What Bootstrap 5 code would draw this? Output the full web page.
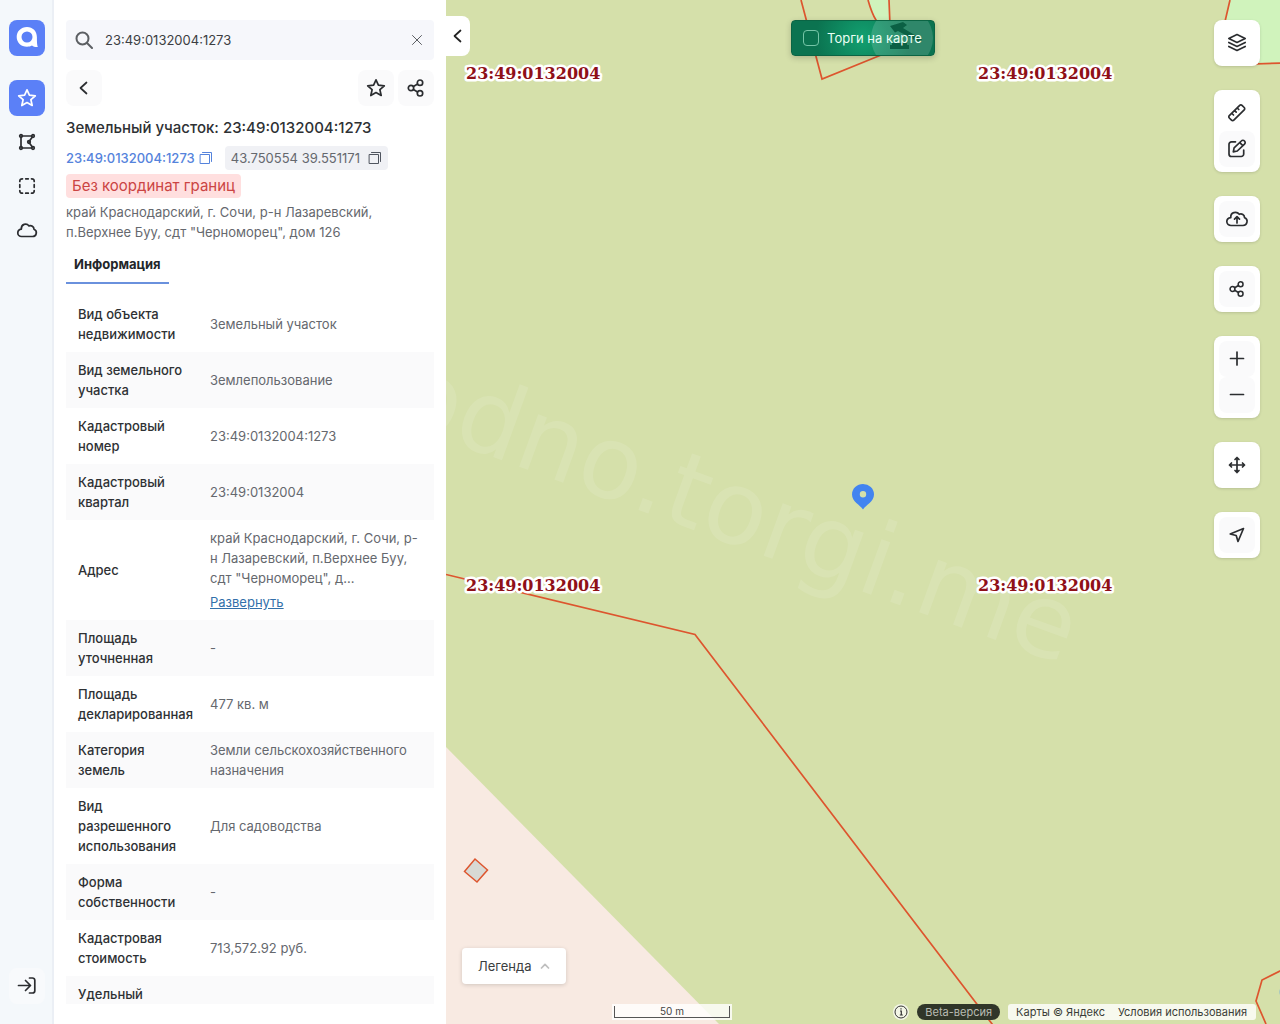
<!DOCTYPE html>
<html lang="ru">
<head>
<meta charset="utf-8">
<meta name="viewport" content="width=device-width, initial-scale=1">
<title>Земельный участок: 23:49:0132004:1273</title>
<link href="https://cdn.jsdelivr.net/npm/bootstrap@5.3.0/dist/css/bootstrap.min.css" rel="stylesheet">
<style>
body{font-family:Inter,"Noto Sans",sans-serif;font-size:13px;line-height:20px;color:#2e3134;background:#fff}
svg.ico{fill:none;stroke:currentColor;stroke-width:1.7;stroke-linecap:round;stroke-linejoin:round;display:block}
svg.ico-thin{stroke-width:1}
svg.ico-bold{stroke-width:2}
.rail{width:54px;padding-left:2px;background:#f4f8fb;border-right:2px solid #ebeff5}
.sq{width:36px;height:36px;padding:0;border:0;border-radius:8px;color:#2b2d30;background:transparent;display:flex;align-items:center;justify-content:center}
.sq-blue,.sq-blue:hover{background:#5b80f7;color:#fff}
.sq-soft{background:#fafafb}
.rail .sq-soft{background:#f8fafc}
.side{width:392px;padding:20px 12px}
.find{height:40px;background:#f6f7fb;border-radius:4px;padding:0 9px;color:#5c5f63}
.find input{font-size:13px;color:#3c3e42;background:transparent;border:0;outline:0;min-width:0;padding:0}
.clear-btn{border:0;background:transparent;padding:0;color:#5c5f63}
.head-btns{margin:10px 0}
h1{font-size:15px;line-height:24px;font-weight:500;margin:0 0 6px}
.code-link{color:#5583dc;font-weight:500;text-decoration:none}
.chip{background:#f0f1f5;border-radius:4px;height:24px;color:#65686e;padding:0 6px;margin-left:12px}
.copy-btn{border:0;background:transparent;padding:0;color:#50555f}
.copy-btn.code-link{color:#5583dc}
.warn{background:#ffdfdf;color:#cb4443;font-size:15px;line-height:24px;border-radius:4px;padding:0 6px}
.addr{color:#65686e}
.tab-on{display:block;border:0;background:transparent;font-weight:700;line-height:20px;padding:0 8px 8px;border-bottom:2px solid #6a91dd;color:#232629;margin-bottom:12px}
.facts{--bs-table-bg:transparent;table-layout:fixed;line-height:20px}
.facts>tbody>tr>*{border:0;padding:8px 12px 8px 8px;vertical-align:middle;color:#65686e}
.facts>tbody>tr>th{width:136px;padding-left:12px;padding-right:8px;font-weight:500;color:#2e3134}
.facts>tbody>tr:nth-child(even){background:#fafafb}
.facts a{color:#3270aa}
.map{background:#d5e0aa}
.fold{left:0;top:16px;width:24px;height:40px;border:0;padding:0;background:#fff;border-radius:0 8px 8px 0;color:#222}
.deals{top:20px;width:144px;height:36px;border:1px solid #0b6444;border-radius:4px;padding-left:11px;gap:8px;background:radial-gradient(circle at 50% 50%,#12a070,#0b7350 65%);color:#eafff5;box-shadow:0 2px 6px rgba(0,0,0,.2);cursor:pointer}
.deals input{appearance:none;width:16px;height:16px;border:1px solid #75c5a7;border-radius:4px;margin:0}
.tools{top:20px;right:20px;gap:24px}
.tool{background:#fff;border-radius:8px;padding:5px;box-shadow:0 1px 3px rgba(0,0,0,.14)}
.legend{left:16px;bottom:40px;height:36px;border:0;border-radius:4px;background:#fff;color:#3a3d40;padding:0 16px;gap:8px;box-shadow:0 1px 4px rgba(0,0,0,.16)}
.base{left:0;right:0;bottom:4px;padding:0 24px 0 166px;font-size:11px;line-height:16px}
.scale-box{background:rgba(255,255,255,.8);padding:2px;width:120px}
.scale-line{border:1px solid #555;border-top:0;height:12px;line-height:11px;font-size:10px;color:#444;text-align:center}
.beta{background:#303629;color:#b9bcb3;border-radius:8px;padding:0 8px}
.credit{background:rgba(255,255,255,.8);border-radius:3px;padding:0 9px 0 8px;gap:13px}
.credit a{color:#3a3d37;text-decoration:none}
</style>
</head>
<body>
<svg width="0" height="0" class="position-absolute" aria-hidden="true">
  <symbol id="star" viewBox="0 0 20 20"><path d="M10 1.800l2.400 5.400 5.900.6-4.400 3.900 1.300 5.800-5.200-3-5.200 3 1.300-5.800L1.700 7.800l5.900-.6z"/></symbol>
  <symbol id="share" viewBox="0 0 20 20"><circle cx="5" cy="10" r="2.700"/><circle cx="14" cy="4.700" r="2.700"/><circle cx="14" cy="15.300" r="2.700"/><path d="M7.400 8.600l4.200-2.500M7.400 11.400l4.200 2.500"/></symbol>
  <symbol id="copy" viewBox="0 0 14 14"><path d="M1.500 3.500h9v9h-9zM3.500 1.500h9v9"/></symbol>
</svg>
<div class="d-flex vh-100 overflow-hidden">
  <nav class="rail d-flex flex-column align-items-center flex-shrink-0 py-3">
    <a href="#" class="sq sq-blue mt-1 mb-4" aria-label="Главная"><svg width="26" height="26" viewBox="0 0 26 26"><path d="M13 2c-6 0-10.300 4.400-10.300 9.900S7 21.700 13 21.700c2 0 3.600-.4 5-1.200 1.500 1.100 3.400 1.700 5.800 1.500-.8-1.800-.9-5.300-.9-9.900C22.900 6.200 18.800 2 13 2zm0 4.500a5.500 5.500 0 1 1 0 11 5.500 5.500 0 0 1 0-11z" fill="#fff" fill-rule="evenodd"/></svg></a>
    <button class="sq sq-blue mb-2" aria-label="Избранное"><svg class="ico" width="20" height="20"><use href="#star"/></svg></button>
    <button class="sq mb-2" aria-label="Полигон"><svg class="ico" width="20" height="20" viewBox="0 0 20 20"><path d="M5.200 4H14.500M4 5.200v9.600M5.200 16H14.500M15.200 5.200l-3 4.100M12.200 10.700l3 4.100"/><circle cx="4" cy="4" r="1.300"/><circle cx="16" cy="4" r="1.300"/><circle cx="4" cy="16" r="1.300"/><circle cx="16" cy="16" r="1.300"/><circle cx="12" cy="10" r="1.300"/></svg></button>
    <button class="sq mb-2" aria-label="Выделить область"><svg class="ico" width="20" height="20" viewBox="0 0 20 20"><path d="M2.800 5.500v-.4a2.300 2.300 0 0 1 2.300-2.300h.4M14.500 2.800h.4a2.300 2.300 0 0 1 2.300 2.300v.4M17.200 14.500v.4a2.300 2.300 0 0 1-2.300 2.300h-.4M5.500 17.200h-.4a2.300 2.300 0 0 1-2.300-2.300v-.4M8.700 2.800h2.600M8.700 17.200h2.600M2.800 8.700v2.600M17.200 8.700v2.600"/></svg></button>
    <button class="sq" aria-label="Облако"><svg class="ico" width="22" height="20" viewBox="0 0 22 20"><path d="M5.500 16.500h11a3.800 3.800 0 0 0 1.500-7.300c0-2.600-2.700-4.200-5-3.300C10.500 2.700 5 4 5.300 9.200c-2 .3-3.500 1.800-3.500 3.700s1.600 3.600 3.700 3.600z"/></svg></button>
    <button class="sq sq-soft mt-auto mb-1" aria-label="Войти"><svg class="ico" width="20" height="20" viewBox="0 0 20 20"><path d="M1.500 9.500h11M8.500 4.500l5 5-5 5M12.500 2h3a2.300 2.300 0 0 1 2.300 2.300v10.400a2.300 2.300 0 0 1-2.300 2.300h-3"/></svg></button>
  </nav>

  <aside class="side d-flex flex-column flex-shrink-0">
    <div class="find d-flex align-items-center flex-shrink-0">
      <svg class="ico ico-bold" width="18" height="18" viewBox="0 0 18 18"><circle cx="7.500" cy="7.500" r="6"/><path d="M12 12l5 5"/></svg>
      <input class="flex-grow-1 ms-2 ps-1" type="text" value="23:49:0132004:1273" aria-label="Поиск">
      <button class="clear-btn" aria-label="Очистить"><svg class="ico ico-thin" width="16" height="16" viewBox="0 0 16 16"><path d="M3.500 3.500l9 9M12.500 3.500l-9 9"/></svg></button>
    </div>
    <div class="d-flex gap-1 head-btns">
      <button class="sq sq-soft me-auto" aria-label="Назад"><svg class="ico" width="16" height="16" viewBox="0 0 16 16"><path d="M10.500 2.500L4.500 8l6 5.500"/></svg></button>
      <button class="sq sq-soft" aria-label="В избранное"><svg class="ico" width="20" height="20"><use href="#star"/></svg></button>
      <button class="sq sq-soft" aria-label="Поделиться"><svg class="ico" width="20" height="20"><use href="#share"/></svg></button>
    </div>
    <h1>Земельный участок: 23:49:0132004:1273</h1>
    <div class="d-flex align-items-center mb-1">
      <a href="#" class="code-link">23:49:0132004:1273</a>
      <button class="copy-btn code-link ms-1" aria-label="Копировать номер"><svg class="ico ico-thin" width="14" height="14"><use href="#copy"/></svg></button>
      <span class="chip d-flex align-items-center gap-2">43.750554 39.551171
        <button class="copy-btn" aria-label="Копировать координаты"><svg class="ico ico-thin" width="14" height="14"><use href="#copy"/></svg></button></span>
    </div>
    <div class="warn align-self-start mb-1">Без координат границ</div>
    <div class="addr mb-2 pb-1">край Краснодарский, г. Сочи, р-н Лазаревский, п.Верхнее Буу, сдт "Черноморец", дом 126</div>
    <div><button class="tab-on">Информация</button></div>
    <div class="overflow-hidden flex-grow-1">
      <table class="table facts mb-0"><tbody>
        <tr><th scope="row">Вид объекта недвижимости</th><td>Земельный участок</td></tr>
        <tr><th scope="row">Вид земельного участка</th><td>Землепользование</td></tr>
        <tr><th scope="row">Кадастровый номер</th><td>23:49:0132004:1273</td></tr>
        <tr><th scope="row">Кадастровый квартал</th><td>23:49:0132004</td></tr>
        <tr><th scope="row">Адрес</th><td>край Краснодарский, г. Сочи, р-н Лазаревский, п.Верхнее Буу, сдт "Черноморец", д...<a href="#" class="d-block pt-1">Развернуть</a></td></tr>
        <tr><th scope="row">Площадь уточненная</th><td>-</td></tr>
        <tr><th scope="row">Площадь декларированная</th><td>477 кв. м</td></tr>
        <tr><th scope="row">Категория земель</th><td>Земли сельскохозяйственного назначения</td></tr>
        <tr><th scope="row">Вид разрешенного использования</th><td>Для садоводства</td></tr>
        <tr><th scope="row">Форма собственности</th><td>-</td></tr>
        <tr><th scope="row">Кадастровая стоимость</th><td>713,572.92 руб.</td></tr>
        <tr><th scope="row">Удельный</th><td></td></tr>
      </tbody></table>
    </div>
  </aside>

  <main class="map position-relative flex-grow-1 overflow-hidden">
    <svg class="position-absolute top-0 start-0 w-100 h-100">
      <path d="M0 747L273 1024H0z" fill="#f8eae2"/>
      <path d="M422 0h21l2 53h-11V34L430 20z" fill="#d0f3bc"/>
      <path d="M784 0h60v63l-64 2-12-6z" fill="#d0f3bc"/>
      <g fill="none" stroke="#dd552e" stroke-width="1.700">
        <path d="M355 0l21 79 69-28L443 0M422 0q4 14 8 20l8 14M784 0l-14 60 8 5 60-2M0 574.500l249 60 299 392M840 968l-24 12-6 21 10 23"/>
        <path d="M18.500 871.500L29 859l12.500 11L31 882z" fill="#d8d9d4" stroke-width="1.500"/>
      </g>
      <circle cx="838" cy="992" r="5" fill="#a8c8c0"/>
      <text transform="translate(-55 420) rotate(20)" font-family="DejaVu Sans" font-size="102" fill="#fff" fill-opacity=".11">odno.torgi.me</text>
      <g font-family="DejaVu Serif" font-weight="700" font-size="16" fill="#8f1018" stroke="#fff" stroke-width="5" stroke-linejoin="round" paint-order="stroke">
        <text x="20" y="79">23:49:0132004</text><text x="532" y="79">23:49:0132004</text>
        <text x="20" y="591">23:49:0132004</text><text x="532" y="591">23:49:0132004</text>
      </g>
      <path d="M417 509.500c-3-4.500-11-8-11-15a11 10.500 0 0 1 22 0c0 7-8 10.500-11 15zM417 491a3.200 3.200 0 1 0 0 6.400 3.200 3.200 0 0 0 0-6.400z" fill="#4284f0" fill-rule="evenodd"/>
    </svg>

    <button class="fold position-absolute d-flex align-items-center justify-content-center" aria-label="Свернуть панель"><svg class="ico" width="16" height="16" viewBox="0 0 16 16"><path d="M10.500 2.500L4.500 8l6 5.500"/></svg></button>

    <label class="deals position-absolute start-50 translate-middle-x d-flex align-items-center overflow-hidden" for="deals">
      <svg class="position-absolute top-0 start-0" width="142" height="34"><circle cx="110" cy="17" r="31" fill="#fff" fill-opacity=".15"/><g fill="#0b6044"><path d="M98 5l5-1.500L111 1l4 3-4 3 19 11.500-2.500 3L106 10l-3 1.500z"/><path d="M100 22h15v2h2v4H98v-4h2z"/></g></svg>
      <input id="deals" type="checkbox" class="position-relative"><span class="position-relative">Торги на карте</span>
    </label>

    <div class="tools position-absolute d-flex flex-column">
      <div class="tool"><button class="sq" aria-label="Слои"><svg class="ico" width="20" height="20" viewBox="0 0 20 20"><path d="M10 1.500L1.800 5.500 10 9.500l8.200-4zM1.800 9.500L10 13.500l8.200-4M1.800 13.500l8.200 4 8.200-4"/></svg></button></div>
      <div class="tool"><button class="sq" aria-label="Линейка"><svg class="ico" width="20" height="20" viewBox="0 0 20 20"><path d="M2.300 12.700L12.700 2.300a1.600 1.600 0 0 1 2.300 0l2.200 2.200a1.600 1.600 0 0 1 0 2.300L6.800 17.200a1.600 1.600 0 0 1-2.300 0l-2.200-2.200a1.600 1.600 0 0 1 0-2.300zM5 10.500L6.500 12M7.700 7.700l1.500 1.500M10.300 5l1.500 1.500"/></svg></button><button class="sq sq-soft" aria-label="Правка"><svg class="ico" width="20" height="20" viewBox="0 0 20 20"><path d="M8.500 2.800h-4a2.500 2.500 0 0 0-2.500 2.500v9.700a2.500 2.500 0 0 0 2.500 2.500h9.700a2.500 2.500 0 0 0 2.500-2.500v-4M14.300 2a2.200 2.200 0 0 1 3.200 3.200L10.300 12l-4 .8.800-4zM12.800 3.700l3 3"/></svg></button></div>
      <div class="tool"><button class="sq sq-soft" aria-label="Загрузить"><svg class="ico" width="24" height="20" viewBox="0 0 24 20"><path d="M6 16.500h12a4.100 4.100 0 0 0 1.500-7.900c0-2.700-2.700-4.300-5.200-3.300-2.700-3.500-9-2-8.500 3.300-2.200.3-4 2-4 4s1.900 3.900 4.200 3.900zM12 14V8M9.500 10.200L12 7.700l2.500 2.500"/></svg></button></div>
      <div class="tool"><button class="sq sq-soft" aria-label="Поделиться картой"><svg class="ico" width="18" height="18"><use href="#share"/></svg></button></div>
      <div class="tool"><button class="sq sq-soft" aria-label="Приблизить"><svg class="ico" width="16" height="16" viewBox="0 0 16 16"><path d="M8 1v13M1.500 7.500h13"/></svg></button><button class="sq sq-soft" aria-label="Отдалить"><svg class="ico" width="16" height="16" viewBox="0 0 16 16"><path d="M1.500 7.500h13"/></svg></button></div>
      <div class="tool"><button class="sq" aria-label="Переместить"><svg class="ico" width="18" height="18" viewBox="0 0 18 18"><path d="M9 1.500v15M1.500 9h15M7 3.500l2-2 2 2M7 14.500l2 2 2-2M3.500 7l-2 2 2 2M14.500 7l2 2-2 2"/></svg></button></div>
      <div class="tool"><button class="sq sq-soft" aria-label="Моё местоположение"><svg class="ico" width="18" height="18" viewBox="0 0 18 18"><path d="M15.500 2.500L2.200 8l6 1.500 1.800 6z"/></svg></button></div>
    </div>

    <button class="legend position-absolute d-flex align-items-center">Легенда <svg class="ico text-black-50 opacity-50" width="10" height="8" viewBox="0 0 10 8"><path d="M1.500 6L5 2.300 8.500 6"/></svg></button>

    <div class="base position-absolute d-flex align-items-center">
      <div class="scale-box me-auto"><div class="scale-line">50 m</div></div>
      <svg class="me-2" width="16" height="16" viewBox="0 0 16 16"><circle cx="8" cy="8" r="8" fill="#fff" fill-opacity=".7"/><circle cx="8" cy="8" r="6" fill="none" stroke="#333"/><path d="M7 7h1.300v4M6.800 11h3M8 4.300v1.200" fill="none" stroke="#333" stroke-width="1.200"/></svg>
      <span class="beta me-2">Beta-версия</span>
      <span class="credit d-flex"><a href="#">Карты © Яндекс</a><a href="#">Условия использования</a></span>
    </div>
  </main>
</div>
<script src="https://cdn.jsdelivr.net/npm/bootstrap@5.3.0/dist/js/bootstrap.bundle.min.js"></script>
</body>
</html>
